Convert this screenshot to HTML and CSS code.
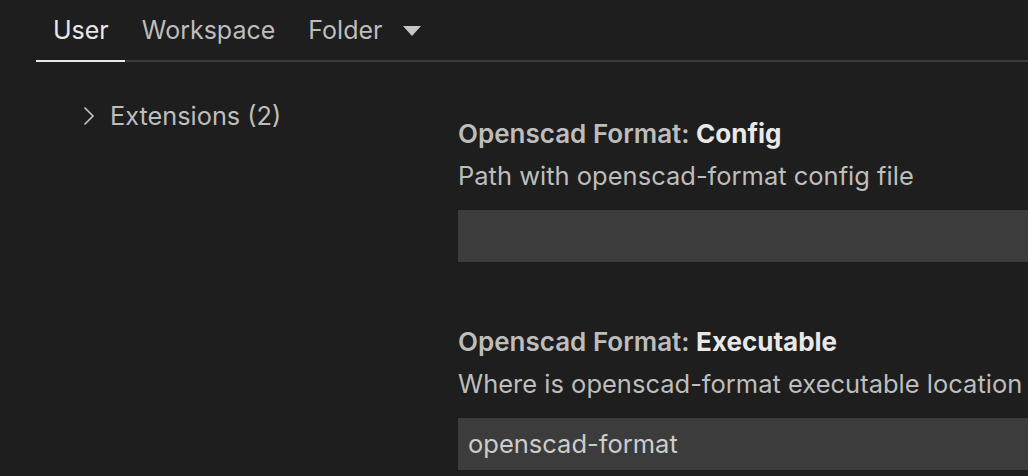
FILE: index.html
```html
<!DOCTYPE html>
<html>
<head>
<meta charset="utf-8">
<link rel="stylesheet" href="styles.css">
</head>
<body>
<div class="tabs">
  <div class="tab active">User</div>
  <div class="tab">Workspace</div>
  <div class="tab folder">Folder <span class="tri"><svg width="18" height="10" viewBox="0 0 18 10"><path d="M0 0H18L9 10Z" fill="#c5c5c5"/></svg></span></div>
</div>
<div class="main">
  <div class="tree">
    <div class="tree-item">
      <svg class="chev" width="12" height="20" viewBox="0 0 12 20"><path d="M1.5 1.5L10 10L1.5 18.5" fill="none" stroke="#c5c5c5" stroke-width="1.6"/></svg>
      <span>Extensions (2)</span>
    </div>
  </div>
  <div class="settings">
    <div class="setting">
      <div class="title"><span class="cat">Openscad Format: </span><span class="name">Config</span></div>
      <div class="desc">Path with openscad-format config file</div>
      <div class="input"></div>
    </div>
    <div class="setting">
      <div class="title"><span class="cat">Openscad Format: </span><span class="name">Executable</span></div>
      <div class="desc">Where is openscad-format executable location</div>
      <div class="input">openscad-format</div>
    </div>
  </div>
</div>
</body>
</html>
```
FILE: styles.css
```css
html, body {
  margin: 0;
  padding: 0;
  background: #1e1e1e;
  height: 100%;
  overflow: hidden;
}
body {
  font-family: Inter, "Noto Sans", sans-serif;
  color: #cccccc;
}
.tabs {
  display: flex;
  align-items: flex-end;
  height: 60px;
  margin-left: 36px;
  border-bottom: 2px solid #3a3a3a;
}
.tab {
  font-size: 25px;
  color: #bdbdbd;
  padding: 0 16px 0 17px;
  height: 60px;
  line-height: 60px;
  box-sizing: border-box;
}
.tab.active {
  color: #e8e8e8;
  border-bottom: 2px solid #e8e8e8;
  height: 62px;
  margin-bottom: -2px;
}
.folder {
  display: flex;
  align-items: center;
}
.tri {
  display: flex;
  margin-left: 21px;
  margin-top: 2px;
}
.main {
  display: flex;
}
.tree {
  width: 422px;
  padding-left: 83px;
  padding-top: 38px;
  box-sizing: border-box;
}
.tree-item {
  display: flex;
  align-items: center;
  gap: 15px;
  font-size: 25.3px;
  color: #bdbdbd;
}
.settings {
  padding-left: 36px;
  padding-top: 56px;
  flex: 1;
}
.setting {
  margin-bottom: 64px;
}
.setting:last-child {
  margin-bottom: 0;
}
.title {
  font-size: 26px;
  font-weight: 600;
  line-height: 31px;
  white-space: nowrap;
}
.cat { color: #bdbdbd; }
.name { color: #e8e8e8; font-weight: 700; }
.desc {
  font-size: 25.5px;
  color: #bdbdbd;
  margin-top: 11px;
  line-height: 31px;
  white-space: nowrap;
}
.input {
  margin-top: 19px;
  height: 52px;
  background: #3c3c3c;
  font-size: 25.5px;
  color: #cccccc;
  line-height: 52px;
  padding-left: 10px;
}
```
